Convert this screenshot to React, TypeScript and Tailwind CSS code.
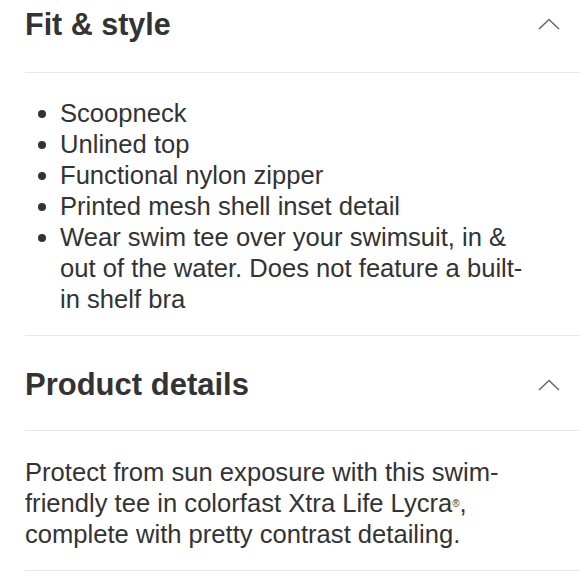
import React from "react";

function Chevron() {
  return (
    <svg width="22" height="12" viewBox="0 0 22 12" className="shrink-0">
      <polyline points="1,11 11,1.5 21,11" fill="none" stroke="#6b6b6b" strokeWidth="1.6" />
    </svg>
  );
}

const bullets = [
  "Scoopneck",
  "Unlined top",
  "Functional nylon zipper",
  "Printed mesh shell inset detail",
  "Wear swim tee over your swimsuit, in & out of the water. Does not feature a built-in shelf bra",
];

export default function App() {
  return (
    <div
      className="w-[580px] h-[580px] overflow-hidden bg-white text-[#333333]"
      style={{ fontFamily: '"Liberation Sans", Arial, Helvetica, sans-serif' }}
    >
      <div className="pl-[25px]">
        <div className="flex items-center justify-between pt-[6px] pb-[30px] pr-[20px]">
          <h2 className="text-[30.5px] leading-[36px] font-bold">Fit &amp; style</h2>
          <Chevron />
        </div>
        <div className="border-t border-[#e6e6e6] pt-[25px] pb-[20px] pr-[38px]">
          <ul>
            {bullets.map((b) => (
              <li key={b} className="flex text-[25.6px] leading-[31px]">
                <span className="w-[35px] shrink-0 flex items-start pt-[12px] pl-[13px]">
                  <span className="block w-[8px] h-[8px] rounded-full bg-[#333333]" />
                </span>
                <span>{b}</span>
              </li>
            ))}
          </ul>
        </div>
        <div className="border-t border-[#e6e6e6] flex items-center justify-between pt-[31px] pb-[27px] pr-[20px]">
          <h2 className="text-[31px] leading-[36px] font-bold">Product details</h2>
          <Chevron />
        </div>
        <div className="border-t border-[#e6e6e6] pt-[26px] pb-[20px] pr-[38px]">
          <p className="text-[25.6px] leading-[31px]">
            Protect from sun exposure with this swim-friendly tee in colorfast Xtra Life Lycra
            <span className="inline-block text-[10px] leading-[10px] align-[5px]">®</span>, complete with pretty
            contrast detailing.
          </p>
        </div>
        <div className="border-t border-[#e6e6e6]" />
      </div>
    </div>
  );
}
